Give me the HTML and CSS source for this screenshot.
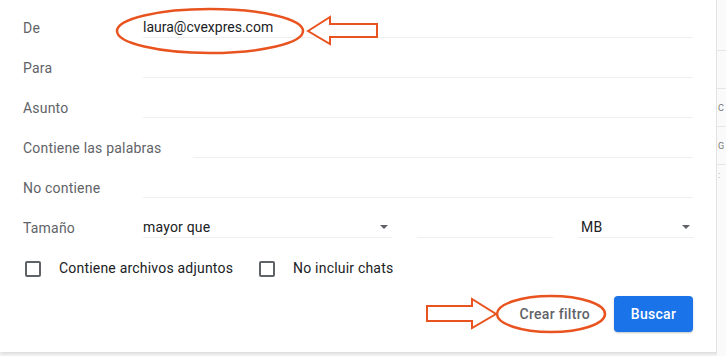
FILE: index.html
```html
<!DOCTYPE html>
<html lang="es">
<head>
<meta charset="utf-8">
<link rel="stylesheet" href="styles.css">
</head>
<body>
<div class="page">
  <div class="dialog">
    <div class="row">
      <label class="label">De</label>
      <div class="field">laura@cvexpres.com</div>
    </div>
    <div class="row">
      <label class="label">Para</label>
      <div class="field"></div>
    </div>
    <div class="row">
      <label class="label">Asunto</label>
      <div class="field"></div>
    </div>
    <div class="row">
      <label class="label">Contiene las palabras</label>
      <div class="field"></div>
    </div>
    <div class="row">
      <label class="label">No contiene</label>
      <div class="field"></div>
    </div>
    <div class="row">
      <label class="label">Tamaño</label>
      <div class="size">
        <div class="field select sel-cmp">mayor que<span class="caret"></span></div>
        <div class="field num"></div>
        <div class="field select sel-unit">MB<span class="caret"></span></div>
      </div>
    </div>
    <div class="row checks">
      <div class="check"><span class="box"></span><span>Contiene archivos adjuntos</span></div>
      <div class="check"><span class="box"></span><span>No incluir chats</span></div>
    </div>
    <div class="actions">
      <button class="btn-text">Crear filtro</button>
      <button class="btn-primary">Buscar</button>
    </div>
  </div>
  <div class="side">
    <div class="side-cell"></div>
    <div class="side-cell txt">C</div>
    <div class="side-cell txt">G</div>
    <div class="side-cell dots">:</div>
  </div>
  <svg class="marks" width="726" height="356" viewBox="0 0 726 356">
    <ellipse cx="210" cy="31" rx="93" ry="22" fill="none" stroke="#e8531f" stroke-width="2.5"/>
    <polygon points="308,31 330,17 330,24 377,24 377,37 330,37 330,44" fill="#fff" stroke="#e8531f" stroke-width="2" stroke-linejoin="miter"/>
    <ellipse cx="551" cy="314" rx="54" ry="18" fill="none" stroke="#e8531f" stroke-width="2.5"/>
    <polygon points="427,306 472,306 472,299 496,314 472,328 472,321 427,321" fill="#fff" stroke="#e8531f" stroke-width="2" stroke-linejoin="miter"/>
  </svg>
</div>
</body>
</html>
```

FILE: styles.css
```css
* { box-sizing: border-box; }
html, body { margin: 0; padding: 0; }
body {
  width: 726px;
  height: 356px;
  overflow: hidden;
  background: #f1f1f1;
  font-family: Roboto, "Liberation Sans", Arial, sans-serif;
  font-size: 14px;
  letter-spacing: 0.2px;
  color: #202124;
}
.page {
  position: relative;
  display: flex;
  width: 726px;
  height: 356px;
}
.dialog {
  width: 717px;
  height: 352px;
  background: #fff;
  padding: 8px 23px 0 23px;
  border-right: 1px solid #e2e2e2;
  box-shadow: 1px 1px 3px rgba(0,0,0,0.12);
  display: flex;
  flex-direction: column;
}
.row {
  height: 40px;
  display: flex;
  align-items: center;
}
.label {
  min-width: 120px;
  padding-right: 32px;
  color: #5f6368;
  white-space: nowrap;
}
.field {
  flex: 1;
  height: 19px;
  line-height: 16px;
  border-bottom: 1px solid #efefef;
  color: #202124;
  letter-spacing: 0;
  position: relative;
}
.size {
  flex: 1;
  display: flex;
  gap: 25px;
  align-items: center;
}
.sel-cmp { flex: 0 0 249px; letter-spacing: 0.2px; }
.num { flex: 0 0 136px; }
.sel-unit { flex: 0 0 116px; padding-left: 3px; letter-spacing: 0.2px; }
.caret {
  position: absolute;
  right: 4px;
  top: 6px;
  width: 0;
  height: 0;
  border-left: 4px solid transparent;
  border-right: 4px solid transparent;
  border-top: 4px solid #5f6368;
}
.checks {
  gap: 26px;
  padding-left: 2px;
}
.check {
  display: flex;
  align-items: center;
  gap: 18px;
  color: #202124;
}
.box {
  width: 16px;
  height: 16px;
  border: 2px solid #5f6368;
  border-radius: 2px;
  margin-top: 2px;
}
.actions {
  margin-top: 8px;
  display: flex;
  justify-content: flex-end;
  align-items: center;
  gap: 12px;
}
.btn-text, .btn-primary {
  font-family: Roboto, "Liberation Sans", Arial, sans-serif;
  font-size: 14px;
  font-weight: 500;
  border: none;
  height: 36px;
  border-radius: 4px;
  letter-spacing: 0.3px;
}
.btn-text {
  background: transparent;
  color: #5f6368;
  padding: 0 12px;
}
.btn-primary {
  background: #1a73e8;
  color: #fff;
  width: 79px;
  padding: 0;
  box-shadow: 0 1px 2px rgba(60,64,67,0.3);
}
.side {
  flex: 1;
  height: 356px;
  background: #fafafa;
  overflow: hidden;
  display: flex;
  flex-direction: column;
  padding-top: 50px;
}
.side-cell {
  height: 38px;
  border-top: 1px solid #e6e6e6;
  font-size: 9px;
  letter-spacing: 0;
  color: #777;
  line-height: 38px;
  padding-left: 1px;
  white-space: nowrap;
}
.dots { line-height: 20px; font-size: 9px; color: #999; }
.marks {
  position: absolute;
  left: 0;
  top: 0;
  pointer-events: none;
}
```
